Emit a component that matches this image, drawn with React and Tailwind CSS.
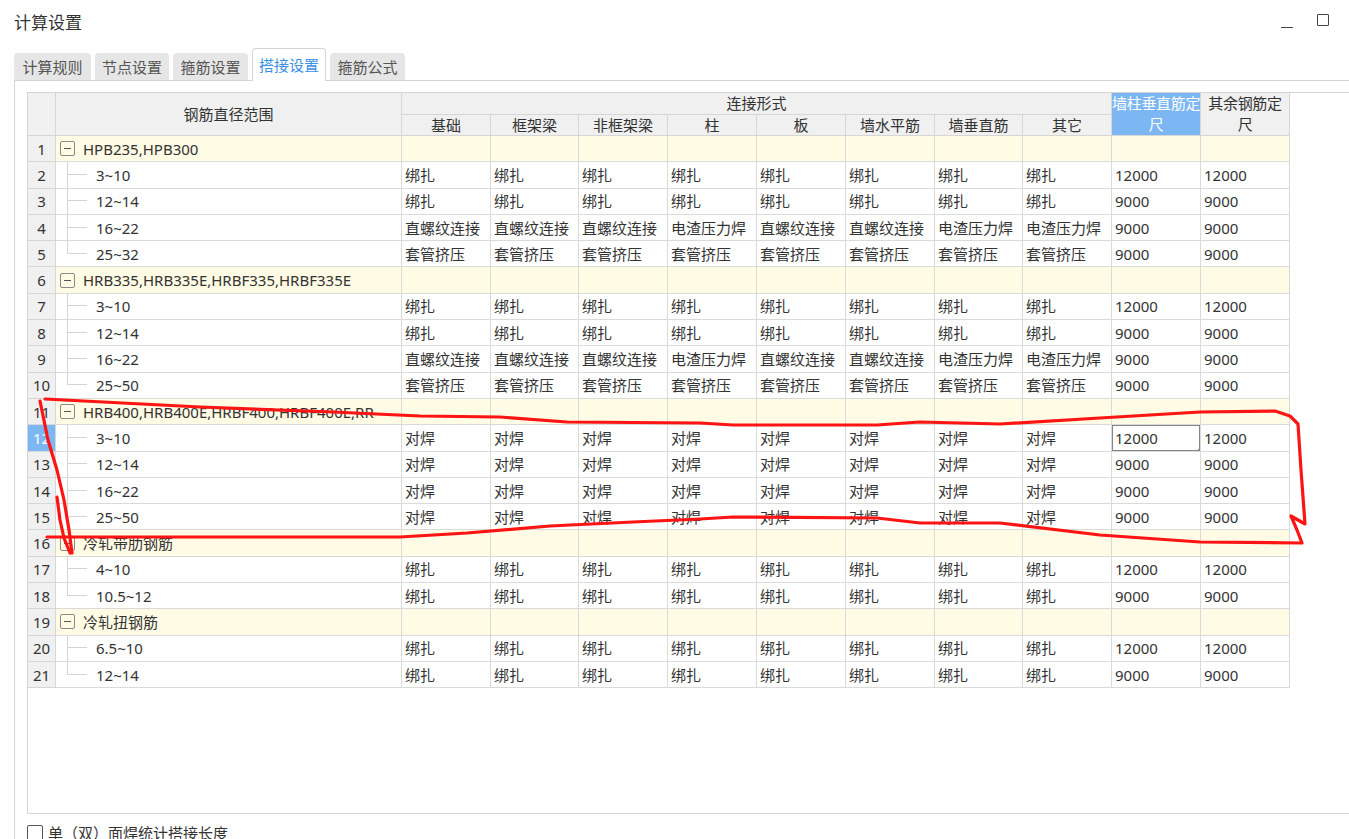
import React from "react";

const COLS = ["基础", "框架梁", "非框架梁", "柱", "板", "墙水平筋", "墙垂直筋", "其它"];
const WIDTHS = ["w-[89px]", "w-[88px]", "w-[89px]", "w-[89px]", "w-[89px]", "w-[89px]", "w-[88px]", "w-[89px]"];

const B8 = Array(8).fill("绑扎");
const D8 = Array(8).fill("对焊");
const T8 = Array(8).fill("套管挤压");
const ZL = ["直螺纹连接", "直螺纹连接", "直螺纹连接", "电渣压力焊", "直螺纹连接", "直螺纹连接", "电渣压力焊", "电渣压力焊"];

// 分组 + 子项
const groups = [
  {
    name: "HPB235,HPB300",
    items: [
      ["3~10", B8, "12000", "12000"],
      ["12~14", B8, "9000", "9000"],
      ["16~22", ZL, "9000", "9000"],
      ["25~32", T8, "9000", "9000"],
    ],
  },
  {
    name: "HRB335,HRB335E,HRBF335,HRBF335E",
    items: [
      ["3~10", B8, "12000", "12000"],
      ["12~14", B8, "9000", "9000"],
      ["16~22", ZL, "9000", "9000"],
      ["25~50", T8, "9000", "9000"],
    ],
  },
  {
    name: "HRB400,HRB400E,HRBF400,HRBF400E,RR",
    items: [
      ["3~10", D8, "12000", "12000"],
      ["12~14", D8, "9000", "9000"],
      ["16~22", D8, "9000", "9000"],
      ["25~50", D8, "9000", "9000"],
    ],
  },
  {
    name: "冷轧带肋钢筋",
    items: [
      ["4~10", B8, "12000", "12000"],
      ["10.5~12", B8, "9000", "9000"],
    ],
  },
  {
    name: "冷轧扭钢筋",
    items: [
      ["6.5~10", B8, "12000", "12000"],
      ["12~14", B8, "9000", "9000"],
    ],
  },
];

const cell = "border border-[#dadada] px-[3px] whitespace-nowrap overflow-hidden";
const head = "border border-[#d6d6d6] bg-[#f0f0f0] font-normal text-[#333] text-center p-0";

function Tabs() {
  const tabs = [
    ["计算规则", "w-[77px]"],
    ["节点设置", "w-[74px]"],
    ["箍筋设置", "w-[75px]"],
    ["搭接设置", "w-[74px]"],
    ["箍筋公式", "w-[75px]"],
  ];
  return (
    <div className="flex items-end gap-[4px] pl-[14px] h-[36px]">
      {tabs.map(([t, w], i) =>
        i === 3 ? (
          <div
            key={t}
            className={w + " h-[33px] bg-white border border-b-0 border-[#d4d4d4] rounded-t-[4px] text-[#3b8fe4] text-[15px] flex items-center justify-center -mb-px relative z-10"}
          >
            {t}
          </div>
        ) : (
          <div
            key={t}
            className={w + " h-[27px] bg-[#e6e6e6] rounded-t-[4px] text-[#555] text-[15px] flex items-center justify-center"}
          >
            {t}
          </div>
        )
      )}
    </div>
  );
}

function Annotation() {
  return (
    <svg className="absolute inset-0 pointer-events-none" width="1349" height="839">
      <g fill="none" stroke="#ff1414" strokeWidth="3.2" strokeLinecap="round" strokeLinejoin="round">
        <path d="M45,399 L200,407 L333,412 L420,416 L500,417 L567,422 L700,423 L733,425 L877,425 L920,422 L1000,424 L1100,418 L1200,412 L1275,411 L1290,416 L1298,424 L1301,470 L1305,524 L1291,516 L1297,530 L1302,543 L1200,542 L1100,535 L1000,523 L920,523 L877,518 L733,517 L700,519 L633,522 L550,526 L467,533 L400,537 L200,537 L47,537" />
        <path d="M40,401 L48,440 L57,470 L64,500 L69,530 L72,553" />
        <path d="M57,497 L60,520 L64,538 L70,553" />
      </g>
    </svg>
  );
}

export default function App() {
  let n = 0;
  const rows = [];
  groups.forEach((g, gi) => {
    n += 1;
    rows.push(
      <tr key={"g" + gi} className="h-[26.3px] bg-[#fffbe4]">
        <td className="border border-[#d6d6d6] bg-[#f0f0f0] text-center text-[#333] p-0">{n}</td>
        <td className={cell}>
          <div className="flex items-center gap-[8px] pl-px">
            <span className="w-[15px] h-[15px] border border-[#8a8a8a] rounded-[2px] flex items-center justify-center">
              <span className="w-[7px] h-px bg-[#555]" />
            </span>
            <span className="text-[#333]">{g.name}</span>
          </div>
        </td>
        {Array(10).fill(0).map((_, i) => (
          <td key={i} className={cell} />
        ))}
      </tr>
    );
    g.items.forEach((it, ii) => {
      n += 1;
      const last = ii === g.items.length - 1;
      const sel = n === 12;
      rows.push(
        <tr key={"r" + n} className="h-[26.3px] bg-white">
          <td
            className={
              "border border-[#d6d6d6] text-center p-0 " +
              (sel ? "bg-[#7cb7f4] text-white" : "bg-[#f0f0f0] text-[#333]")
            }
          >
            {n}
          </td>
          <td className={cell + " relative"}>
            <span className="absolute left-[11px] top-0 h-1/2 w-[20px] border-l border-b border-[#d4d4d4]" />
            {!last && <span className="absolute left-[11px] top-1/2 h-1/2 border-l border-[#d4d4d4]" />}
            <span className="pl-[37px] text-[#333]">{it[0]}</span>
          </td>
          {it[1].map((v, i) => (
            <td key={i} className={cell + " text-[#333]"}>
              {v}
            </td>
          ))}
          <td className={cell + " text-[#333] relative"}>
            {it[2]}
            {sel && (
              <span className="absolute -left-px -top-px -right-px -bottom-px border-2 border-[#858585]">
                <span className="absolute -right-[4px] -bottom-[4px] w-[5px] h-[5px] bg-[#858585]" />
              </span>
            )}
          </td>
          <td className={cell + " text-[#333]"}>{it[3]}</td>
        </tr>
      );
    });
  });

  return (
    <div
      className="relative w-[1349px] h-[839px] overflow-hidden bg-white text-[15px] leading-[20px]"
      style={{ fontFamily: '"Noto Sans", "Noto Sans CJK SC", sans-serif' }}
    >
      {/* 标题栏 */}
      <div className="h-[44px] flex items-center justify-between pl-[14px] pr-[20px]">
        <span className="text-[17px] text-[#333] mt-[1px]">计算设置</span>
        <div className="flex items-center gap-[24px]">
          <span className="w-[12px] h-px bg-[#444] mt-[10px]" />
          <span className="w-[12px] h-[12px] border border-[#444] rounded-[1px] -mt-[4px]" />
        </div>
      </div>

      <Tabs />

      {/* 内容面板 */}
      <div className="ml-[14px] border-l border-t border-[#d4d4d4] h-[760px] pl-[12px] pt-[11px]">
        <div className="w-[1340px] h-[722px] border border-[#d4d4d4] overflow-hidden">
          <table className="table-fixed border-collapse -mt-px -ml-px w-[1262px]">
            <colgroup>
              <col className="w-[28px]" />
              <col className="w-[346px]" />
              {WIDTHS.map((w, i) => (
                <col key={i} className={w} />
              ))}
              <col className="w-[89px]" />
              <col className="w-[89px]" />
            </colgroup>
            <thead className="leading-[20px]">
              <tr className="h-[21px]">
                <th rowSpan={2} className={head} />
                <th rowSpan={2} className={head}>钢筋直径范围</th>
                <th colSpan={8} className={head}>连接形式</th>
                <th rowSpan={2} className="border border-[#d6d6d6] bg-[#7cb7f4] font-normal text-white text-center leading-[21px] p-0 whitespace-nowrap overflow-hidden tracking-[-0.3px]">
                  墙柱垂直筋定<br />尺
                </th>
                <th rowSpan={2} className={head + " leading-[21px] whitespace-nowrap overflow-hidden tracking-[-0.3px]"}>
                  其余钢筋定<br />尺
                </th>
              </tr>
              <tr className="h-[21px]">
                {COLS.map(c => (
                  <th key={c} className={head}>{c}</th>
                ))}
              </tr>
            </thead>
            <tbody>{rows}</tbody>
          </table>
        </div>

        <div className="flex items-center gap-[5px] mt-[9px]">
          <span className="w-[16px] h-[16px] border border-[#555] rounded-[2px] bg-white" />
          <span className="text-[#333]">单（双）面焊统计搭接长度</span>
        </div>
      </div>

      <Annotation />
    </div>
  );
}
